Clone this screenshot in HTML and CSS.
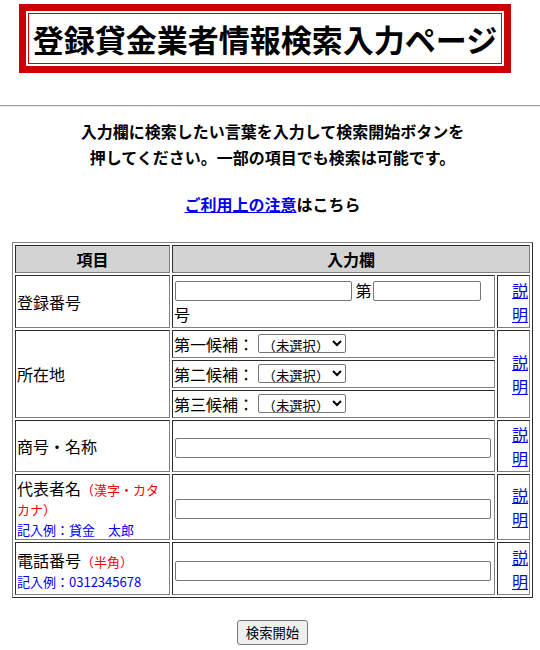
FILE: index.html
```html
<!DOCTYPE html>
<html lang="ja">
<head>
<meta charset="utf-8">
<title>登録貸金業者情報検索入力ページ</title>
<link rel="stylesheet" href="styles.css">
</head>
<body>
<div class="page">
  <div class="title-box"><div class="title-inner">登録貸金業者情報検索入力ページ</div></div>
</div>
<hr class="rule">
<div class="page">
  <p class="lead">入力欄に検索したい言葉を入力して検索開始ボタンを<br>押してください。一部の項目でも検索は可能です。</p>
  <p class="notice"><a href="#">ご利用上の注意</a>はこちら</p>
  <table class="search">
    <colgroup><col class="c1"><col class="c2"><col class="c3"></colgroup>
    <tr class="h-head"><th>項目</th><th colspan="2">入力欄</th></tr>
    <tr class="h-reg">
      <td>登録番号</td>
      <td><input type="text" class="in-a"> 第<input type="text" class="in-b"><br>号</td>
      <td class="help"><a href="#">説明</a></td>
    </tr>
    <tr class="h-sub">
      <td rowspan="3">所在地</td>
      <td>第一候補： <select class="pref"><option>（未選択）</option></select></td>
      <td rowspan="3" class="help"><a href="#">説明</a></td>
    </tr>
    <tr class="h-sub"><td>第二候補： <select class="pref"><option>（未選択）</option></select></td></tr>
    <tr class="h-sub"><td>第三候補： <select class="pref"><option>（未選択）</option></select></td></tr>
    <tr class="h-name">
      <td>商号・名称</td>
      <td><input type="text" class="in-long"></td>
      <td class="help"><a href="#">説明</a></td>
    </tr>
    <tr class="h-rep">
      <td class="label-note">代表者名<span class="note-red">（漢字・カタカナ）</span><br><span class="note-blue">記入例：貸金　太郎</span></td>
      <td><input type="text" class="in-long"></td>
      <td class="help"><a href="#">説明</a></td>
    </tr>
    <tr class="h-tel">
      <td class="label-note">電話番号<span class="note-red">（半角）</span><br><span class="note-blue">記入例：0312345678</span></td>
      <td><input type="text" class="in-long"></td>
      <td class="help"><a href="#">説明</a></td>
    </tr>
  </table>
  <div class="actions"><button type="button" class="submit">検索開始</button></div>
</div>
</body>
</html>
```

FILE: styles.css
```css
html, body {
  margin: 0;
  padding: 0;
  background: #ffffff;
  color: #000000;
  font-family: "Noto Sans CJK JP", "Noto Sans", sans-serif;
  font-size: 16px;
}

.page {
  padding-left: 12px;
  width: 521px;
}

.title-box {
  margin: 4px 0 0 7px;
  width: 474px;
  border: 7px solid #cc0000;
  padding: 2px;
}

.title-inner {
  border: 1px solid #cc0000;
  padding: 0 1px;
  font-size: 31px;
  font-weight: bold;
  line-height: 49px;
  white-space: nowrap;
  text-align: center;
}

.rule {
  margin: 32px 0 0 0;
  height: 0;
  border: 0;
  border-top: 1px solid #9a9a9a;
  border-bottom: 1px solid #eeeeee;
}

.lead {
  margin: 11px 0 0 0;
  font-weight: bold;
  line-height: 26px;
  text-align: center;
}

.notice {
  margin: 21px 0 0 0;
  font-weight: bold;
  line-height: 26px;
  text-align: center;
}

a {
  color: #0000ee;
  text-decoration: underline;
}

.search {
  margin-top: 25px;
  width: 521px;
  table-layout: fixed;
  border-collapse: separate;
  border-spacing: 2px;
  border: 1px outset gray;
}

.c1 { width: 155px; }
.c2 { width: 323px; }
.c3 { width: 33px; }

.search th,
.search td {
  border: 1px inset gray;
  padding: 1px;
  line-height: 24px;
  vertical-align: middle;
  text-align: left;
}

.search th {
  background: #d3d3d3;
  font-weight: bold;
  text-align: center;
}

.h-head { height: 28px; }
.h-reg { height: 53px; }
.h-sub { height: 28px; }
.h-name { height: 52px; }
.h-rep { height: 66px; }
.h-tel { height: 53px; }

.search td.help {
  text-align: right;
  padding-right: 1px;
}

.search td.label-note {
  line-height: 20px;
  padding-top: 3px;
}

.note-red {
  color: #ff0000;
  font-size: 13px;
  line-height: 16px;
}

.note-blue {
  color: #0000ff;
  font-size: 13px;
  line-height: 16px;
}

input[type="text"] {
  box-sizing: border-box;
  height: 20px;
  margin: 0 0 0 1px;
  padding: 1px 2px;
  border: 1px solid #767676;
  border-radius: 2px;
  font-family: "Noto Sans CJK JP", "Noto Sans", sans-serif;
  font-size: 13px;
  background: #ffffff;
}

.in-a { width: 177px; }
.in-b { width: 108px; margin-left: 0; }
.in-long { width: 316px; vertical-align: middle; }

.pref {
  box-sizing: border-box;
  width: 88px;
  height: 19px;
  font-family: "Noto Sans CJK JP", "Noto Sans", sans-serif;
  font-size: 13.33px;
  padding: 0;
  border: 1px solid #767676;
  border-radius: 2px;
  background: #ffffff;
  color: #000000;
}

.actions {
  margin-top: 21px;
  text-align: center;
}

.submit {
  font-family: "Noto Sans CJK JP", "Noto Sans", sans-serif;
  font-size: 13.33px;
  line-height: 19px;
  padding: 2px 8px;
  border: 1px solid #767676;
  border-radius: 3px;
  background: #efefef;
  color: #000000;
}
```
